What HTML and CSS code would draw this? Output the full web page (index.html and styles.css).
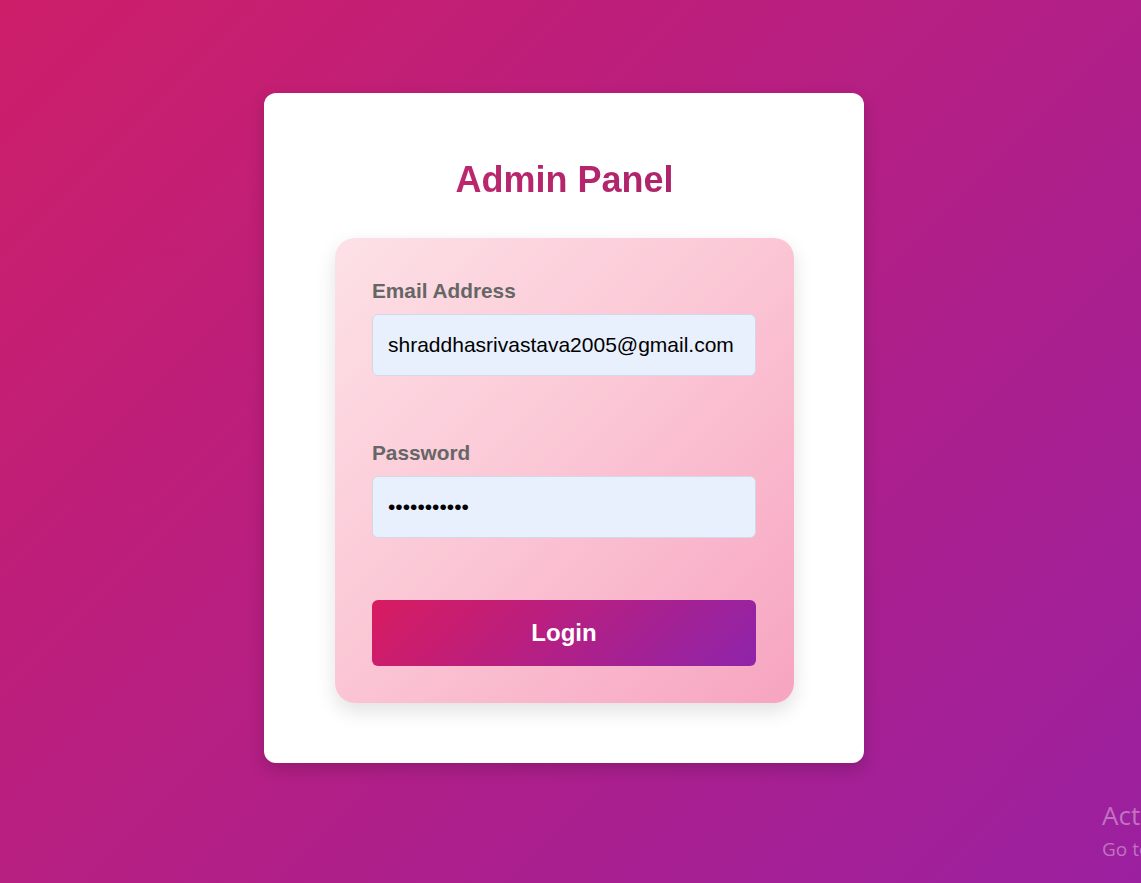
FILE: index.html
```html
<!DOCTYPE html>
<html lang="en">
<head>
<meta charset="utf-8">
<title>Admin Panel</title>
<link rel="stylesheet" href="styles.css">
</head>
<body>
  <main class="page">
    <section class="card">
      <h1 class="title">Admin Panel</h1>
      <form class="form-box">
        <div class="field">
          <label class="label" for="email">Email Address</label>
          <input class="input" id="email" type="email" value="shraddhasrivastava2005@gmail.com">
        </div>
        <div class="field">
          <label class="label" for="password">Password</label>
          <input class="input" id="password" type="password" value="12345678901">
        </div>
        <button class="btn" type="button">Login</button>
      </form>
    </section>
  </main>
  <div class="watermark">
    <div class="wm-title">Activate Windows</div>
    <div class="wm-sub">Go to Settings to activate Windows.</div>
  </div>
</body>
</html>
```

FILE: styles.css
```css
* { box-sizing: border-box; }

html, body {
  margin: 0;
  height: 100%;
}

body {
  font-family: "Liberation Sans", Arial, sans-serif;
  background: linear-gradient(135deg, #cd1e69 0%, #9b20a0 100%);
  overflow: hidden;
  position: relative;
}

.page {
  padding: 93px 0 0 264px;
}

.card {
  width: 600px;
  background: #fff;
  border-radius: 12px;
  padding: 66px 70px 60px 71px;
  box-shadow: 0 6px 16px rgba(0, 0, 0, 0.18);
}

.title {
  margin: 0 0 37px;
  text-align: center;
  font-size: 36px;
  font-weight: bold;
  line-height: normal;
  background: linear-gradient(90deg, #c4296f, #a6226a);
  -webkit-background-clip: text;
  background-clip: text;
  color: transparent;
}

.form-box {
  margin: 0;
  border-radius: 20px;
  padding: 41px 38px 37px 37px;
  background: linear-gradient(135deg, #fde1e7 0%, #fbc8d6 45%, #f7a4c1 100%);
  box-shadow: 0 8px 20px rgba(0, 0, 0, 0.12);
}

.field {
  display: flex;
  flex-direction: column;
}

.field + .field {
  margin-top: 65px;
}

.label {
  font-size: 20.8px;
  font-weight: bold;
  color: #666;
  line-height: 24px;
  margin-bottom: 11px;
}

.input {
  width: 100%;
  height: 62px;
  font-family: "Liberation Sans", Arial, sans-serif;
  font-size: 21px;
  line-height: normal;
  color: #000;
  padding: 0 15px;
  border: 1px solid #d3d9e4;
  border-radius: 6px;
  background: #e8f0fe;
  outline: none;
}

.btn {
  display: block;
  width: 100%;
  margin-top: 62px;
  height: 66px;
  border: none;
  border-radius: 6px;
  font-family: "Liberation Sans", Arial, sans-serif;
  font-size: 24px;
  font-weight: bold;
  color: #fff;
  background: linear-gradient(135deg, #d81b60 0%, #8e24aa 100%);
  cursor: pointer;
}

.watermark {
  position: absolute;
  left: 1102px;
  top: 797px;
  white-space: nowrap;
  color: rgba(255, 255, 255, 0.38);
  font-family: "Open Sans", "Noto Sans", sans-serif;
}

.wm-title {
  font-size: 26px;
  line-height: 36px;
}

.wm-sub {
  font-size: 19px;
  line-height: 24px;
  margin-top: 4px;
}
```
